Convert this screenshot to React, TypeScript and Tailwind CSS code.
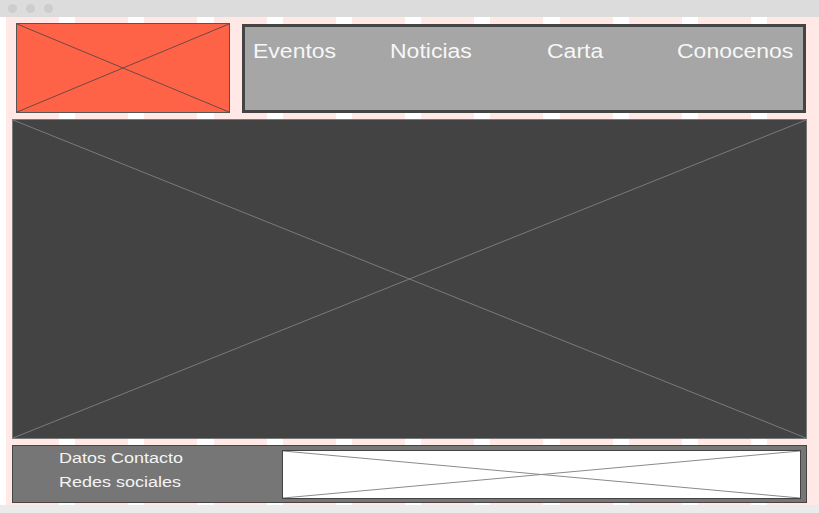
const Cross = ({ color }: { color: string }) => (
  <svg
    className="block h-full w-full"
    viewBox="0 0 100 100"
    preserveAspectRatio="none"
  >
    <line x1="0" y1="0" x2="100" y2="100" stroke={color} strokeWidth="1" vectorEffect="non-scaling-stroke" />
    <line x1="0" y1="100" x2="100" y2="0" stroke={color} strokeWidth="1" vectorEffect="non-scaling-stroke" />
  </svg>
);

const App = () => {
  return (
    <div className="flex h-[513px] w-[819px] flex-col overflow-hidden bg-white font-['Liberation_Sans',Arial,sans-serif]">
      {/* window chrome */}
      <div className="flex h-[17px] shrink-0 items-center gap-[9px] bg-[#dcdcdc] pl-[8px]">
        <span className="h-[9px] w-[9px] rounded-full bg-[#cdcdcd]" />
        <span className="h-[9px] w-[9px] rounded-full bg-[#cdcdcd]" />
        <span className="h-[9px] w-[9px] rounded-full bg-[#cdcdcd]" />
      </div>

      <div className="flex h-[488px] shrink-0 flex-col px-[12px] pt-[6px] bg-[repeating-linear-gradient(90deg,#fff_-10.2px,#fff_6px,#ffe8e5_6px,#ffe8e5_59px)]">
        <div className="flex items-start">
          <div className="ml-[4px] h-[90px] w-[214px] border border-[#555] bg-[#ff6347]">
            <Cross color="#6b4a44" />
          </div>
          <nav className="ml-[12px] mt-[1px] h-[89px] w-[564px] border-[3px] border-[#444] bg-[#a6a6a6] pl-[8px] pt-[13px]">
            <ul className="grid grid-cols-[137px_157px_130px_auto] text-[20px] leading-[23px] text-[#f7f7f7]">
              <li><span className="inline-block origin-left scale-x-[1.15]">Eventos</span></li>
              <li><span className="inline-block origin-left scale-x-[1.15]">Noticias</span></li>
              <li><span className="inline-block origin-left scale-x-[1.15]">Carta</span></li>
              <li><span className="inline-block origin-left scale-x-[1.15]">Conocenos</span></li>
            </ul>
          </nav>
        </div>

        <main className="mt-[6px] h-[320px] w-[795px] border border-[#7a7a7a] bg-[#434343]">
          <Cross color="#7a7a7a" />
        </main>

        <footer className="mt-[6px] flex h-[58px] w-[795px] border border-[#444] bg-[#767676]">
          <div className="w-[269px] pl-[46px] text-[15.5px] leading-[24px] text-[#f4f4f4]">
            <p><span className="inline-block origin-left scale-x-[1.16]">Datos Contacto</span></p>
            <p><span className="inline-block origin-left scale-x-[1.16]">Redes sociales</span></p>
          </div>
          <div className="mt-[4px] h-[49px] w-[519px] border border-[#444] bg-white">
            <Cross color="#8a8a8a" />
          </div>
        </footer>
      </div>

      <div className="h-[8px] shrink-0 bg-[#ebebeb]" />
    </div>
  );
};

export default App;
